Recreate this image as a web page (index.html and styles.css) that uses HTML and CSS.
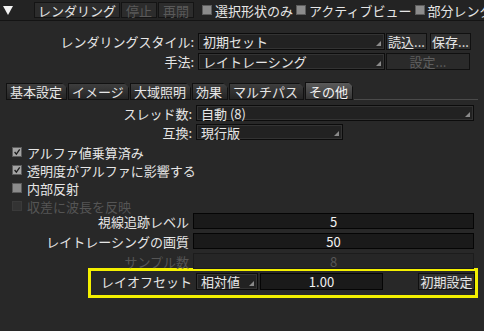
FILE: index.html
```html
<!DOCTYPE html>
<html lang="ja">
<head>
<meta charset="utf-8">
<link rel="stylesheet" href="styles.css">
</head>
<body>
<div class="toolbar">
  <svg class="disclosure" width="10" height="10" viewBox="0 0 10 10"><polygon points="0,1 10,1 5,10" fill="#f2f2f2"/></svg>
  <div class="tbtn w-render">レンダリング</div>
  <div class="tbtn dis w-stop">停止</div>
  <div class="tbtn dis w-stop">再開</div>
  <label class="tcheck"><span class="box"></span>選択形状のみ</label>
  <label class="tcheck"><span class="box"></span>アクティブビュー</label>
  <label class="tcheck"><span class="box"></span>部分レンダリング</label>
</div>

<div class="rows top">
  <div class="row">
    <div class="label l198">レンダリングスタイル:</div>
    <div class="popup w187">初期セット</div>
    <div class="btn w41 ml1">読込...</div>
    <div class="btn w41 ml3">保存...</div>
  </div>
  <div class="row">
    <div class="label l198">手法:</div>
    <div class="popup w187">レイトレーシング</div>
    <div class="btn dis w84 ml1">設定...</div>
  </div>
</div>

<div class="tabs">
  <div class="tab t61">基本設定</div>
  <div class="tab t61">イメージ</div>
  <div class="tab t62">大域照明</div>
  <div class="tab t37">効果</div>
  <div class="tab t76">マルチパス</div>
  <div class="tab active t48">その他</div>
  <div class="tabline"></div>
</div>

<div class="rows mid">
  <div class="row r16">
    <div class="label l196">スレッド数:</div>
    <div class="popup w278">自動 (8)</div>
  </div>
  <div class="row r16">
    <div class="label l196">互換:</div>
    <div class="popup w147">現行版</div>
  </div>
</div>

<div class="checks">
  <div class="check"><span class="box on"><svg width="10" height="10" viewBox="0 0 10 10"><path d="M2 5 L4.2 7.6 L8.4 1.6" stroke="#1c1c1c" stroke-width="1.6" fill="none"/></svg></span>アルファ値乗算済み</div>
  <div class="check"><span class="box on"><svg width="10" height="10" viewBox="0 0 10 10"><path d="M2 5 L4.2 7.6 L8.4 1.6" stroke="#1c1c1c" stroke-width="1.6" fill="none"/></svg></span>透明度がアルファに影響する</div>
  <div class="check"><span class="box"></span>内部反射</div>
  <div class="check dis"><span class="box"></span>収差に波長を反映</div>
</div>

<div class="rows nums">
  <div class="row r16">
    <div class="label l193">視線追跡レベル</div>
    <div class="field w281">5</div>
  </div>
  <div class="row r16">
    <div class="label l193">レイトレーシングの画質</div>
    <div class="field w281">50</div>
  </div>
  <div class="row r16 dis">
    <div class="label l193">サンプル数</div>
    <div class="field w281">8</div>
  </div>
</div>

<div class="highlight">
  <div class="row r17">
    <div class="label hl">レイオフセット</div>
    <div class="popup w62">相対値</div>
    <div class="field w123 ml2">1.00</div>
    <div class="spacer"></div>
    <div class="btn w57">初期設定</div>
  </div>
</div>
</body>
</html>
```

FILE: styles.css
```css
* { box-sizing: border-box; }
html, body { margin: 0; padding: 0; }
body {
  width: 484px;
  height: 331px;
  overflow: hidden;
  background: #282828;
  color: #e6e6e6;
  font-family: "Noto Sans CJK JP", "Noto Sans", sans-serif;
  font-size: 13px;
  line-height: 1;
}

.toolbar {
  height: 21px;
  display: flex;
  align-items: center;
  border-bottom: 1px solid #141414;
  background: #232323;
  white-space: nowrap;
  overflow: hidden;
}
.toolbar > * { flex: none; }
.disclosure { margin-left: 3px; margin-right: 21px; }
.tbtn {
  height: 16px;
  display: flex;
  align-items: center;
  justify-content: center;
  background: #2c2c2c;
  border: 1px solid #141414;
  margin-right: 1px;
}
.w-render { width: 86px; }
.w-stop { width: 36px; }
.tbtn.dis { color: #5a5a5a; }
.tcheck {
  display: flex;
  align-items: center;
  margin-left: 7px;
  margin-right: -4px;
}
.tcheck .box { margin-right: 3px; }

.box {
  width: 10px;
  height: 10px;
  background: #8c8c8c;
  border: 1px solid #5c5c5c;
  display: inline-flex;
  align-items: center;
  justify-content: center;
  flex: none;
}
.box.on { background: #a4a4a4; }
.box svg { display: block; }

.rows { display: flex; flex-direction: column; }
.row { display: flex; align-items: center; height: 17px; }
.row.r16 { height: 16px; }
.row.r17 { height: 17px; }

.top { margin-top: 12px; gap: 3px; }
.label { text-align: right; padding-right: 4px; white-space: nowrap; flex: none; }
.l198 { width: 198px; }
.l196 { width: 196px; }
.l193 { width: 193px; }

.popup {
  position: relative;
  height: 100%;
  background: #222;
  border: 1px solid #0c0c0c;
  box-shadow: inset 0 0 0 1px #333;
  display: flex;
  align-items: center;
  padding-left: 4px;
  flex: none;
}
.popup::after {
  content: "";
  position: absolute;
  right: 3px;
  bottom: 3px;
  width: 5px;
  height: 5px;
  background: #8a8a8a;
  clip-path: polygon(100% 0, 100% 100%, 0 100%);
}
.w187 { width: 187px; }
.w278 { width: 278px; }
.w147 { width: 147px; }
.w62 { width: 62px; }

.btn {
  height: 100%;
  display: flex;
  align-items: center;
  justify-content: center;
  background: #303030;
  border: 1px solid #101010;
  flex: none;
}
.btn.dis { color: #5e5e5e; background: #2a2a2a; }
.w41 { width: 41px; }
.w84 { width: 84px; }
.w57 { width: 57px; }
.ml1 { margin-left: 1px; }
.ml2 { margin-left: 2px; }
.ml3 { margin-left: 3px; }

.tabs {
  display: flex;
  align-items: flex-end;
  margin-top: 12px;
  padding-left: 6px;
  height: 18px;
}
.tab {
  height: 17px;
  display: flex;
  align-items: center;
  padding-left: 3px;
  background: linear-gradient(#3e3e3e, #242424);
  border: 1px solid #111;
  margin-right: 1px;
  clip-path: polygon(0 0, calc(100% - 5px) 0, 100% 5px, 100% 100%, 0 100%);
  flex: none;
}
.tab.active {
  background: linear-gradient(#5a5a5a, #363636);
  color: #f4f4f4;
  height: 18px;
}
.t61 { width: 61px; }
.t62 { width: 61px; }
.t37 { width: 36px; }
.t76 { width: 75px; }
.t48 { width: 48px; }
.tabline {
  flex: none;
  width: 124px;
  height: 1px;
  background: #4a4a4a;
}

.mid { margin-top: 5px; gap: 3px; }

.checks { margin-top: 3px; padding-left: 12px; display: flex; flex-direction: column; }
.check { height: 18px; display: flex; align-items: center; }
.check .box { margin-right: 5px; }
.check.dis { color: #555; }
.check.dis .box { background: #333; border-color: #3a3a3a; }

.nums { margin-top: -2px; gap: 4px; }
.field {
  height: 100%;
  background: #1a1a1a;
  border: 1px solid #050505;
  display: flex;
  align-items: center;
  justify-content: center;
  color: #f2f2f2;
  flex: none;
}
.w281 { width: 281px; }
.w123 { width: 123px; }
.row.dis .label { color: #555; }
.row.dis .field { background: #262626; border-color: #1c1c1c; color: #555; }

.highlight {
  margin-top: -1px;
  margin-left: 88px;
  width: 390px;
  height: 30px;
  border: 3px solid #f4f000;
  padding: 2px 0 0 0;
}
.label.hl { width: 105px; }
.spacer { flex: 1; }
```
